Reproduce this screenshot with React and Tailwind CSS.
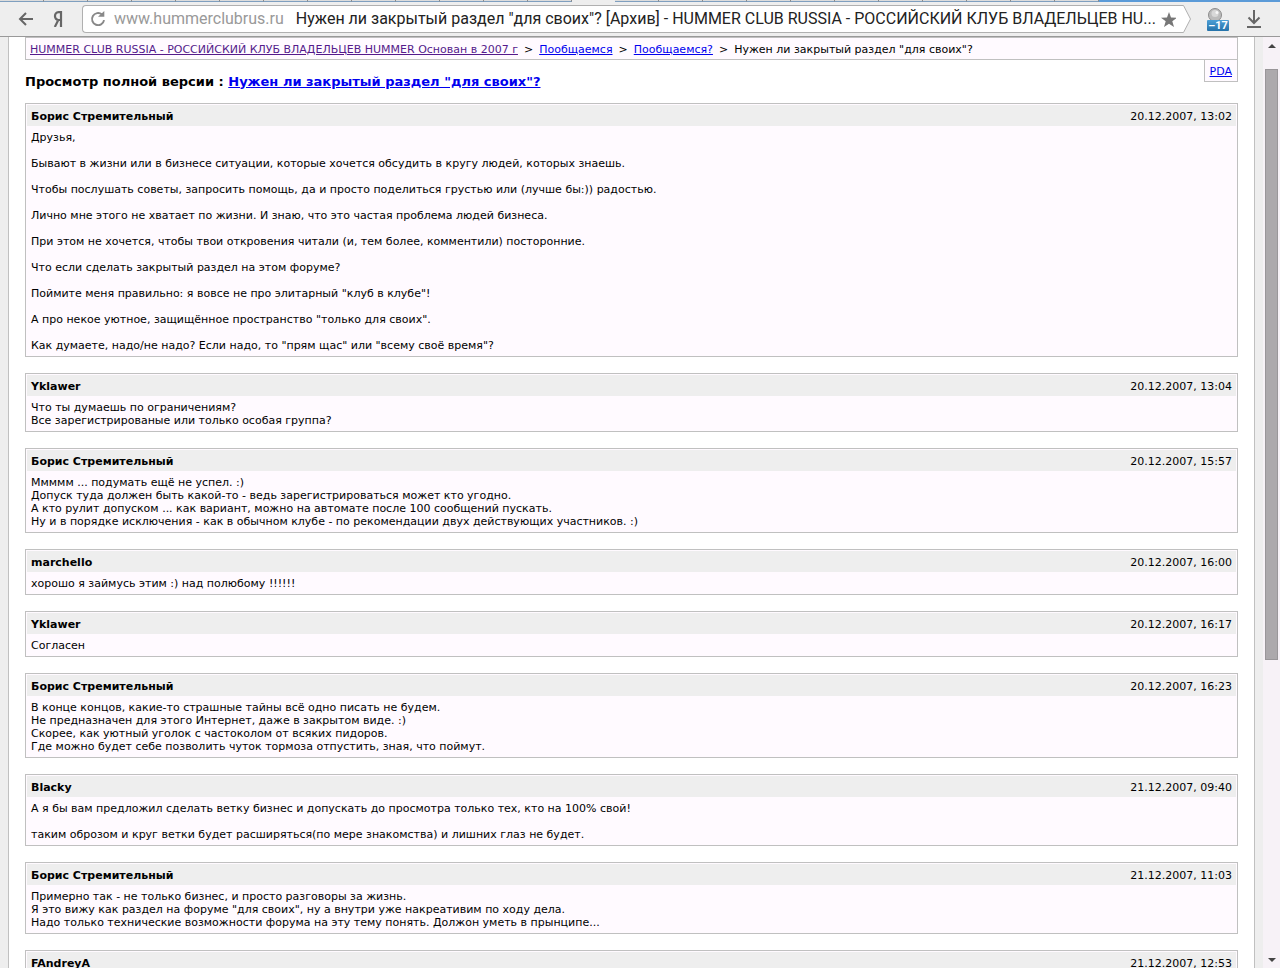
const posts = [
  {
    author: 'Борис Стремительный',
    date: '20.12.2007, 13:02',
    text: `Друзья,

Бывают в жизни или в бизнесе ситуации, которые хочется обсудить в кругу людей, которых знаешь.

Чтобы послушать советы, запросить помощь, да и просто поделиться грустью или (лучше бы:)) радостью.

Лично мне этого не хватает по жизни. И знаю, что это частая проблема людей бизнеса.

При этом не хочется, чтобы твои откровения читали (и, тем более, комментили) посторонние.

Что если сделать закрытый раздел на этом форуме?

Поймите меня правильно: я вовсе не про элитарный "клуб в клубе"!

А про некое уютное, защищённое пространство "только для своих".

Как думаете, надо/не надо? Если надо, то "прям щас" или "всему своё время"?`,
  },
  {
    author: 'Yklawer',
    date: '20.12.2007, 13:04',
    text: `Что ты думаешь по ограничениям?
Все зарегистрированые или только особая группа?`,
  },
  {
    author: 'Борис Стремительный',
    date: '20.12.2007, 15:57',
    text: `Ммммм ... подумать ещё не успел. :)
Допуск туда должен быть какой-то - ведь зарегистрироваться может кто угодно.
А кто рулит допуском ... как вариант, можно на автомате после 100 сообщений пускать.
Ну и в порядке исключения - как в обычном клубе - по рекомендации двух действующих участников. :)`,
  },
  {
    author: 'marchello',
    date: '20.12.2007, 16:00',
    text: 'хорошо я займусь этим :) над полюбому !!!!!!',
  },
  { author: 'Yklawer', date: '20.12.2007, 16:17', text: 'Согласен' },
  {
    author: 'Борис Стремительный',
    date: '20.12.2007, 16:23',
    text: `В конце концов, какие-то страшные тайны всё одно писать не будем.
Не предназначен для этого Интернет, даже в закрытом виде. :)
Скорее, как уютный уголок с частоколом от всяких пидоров.
Где можно будет себе позволить чуток тормоза отпустить, зная, что поймут.`,
  },
  {
    author: 'Blacky',
    date: '21.12.2007, 09:40',
    text: `А я бы вам предложил сделать ветку бизнес и допускать до просмотра только тех, кто на 100% свой!

таким оброзом и круг ветки будет расширяться(по мере знакомства) и лишних глаз не будет.`,
  },
  {
    author: 'Борис Стремительный',
    date: '21.12.2007, 11:03',
    text: `Примерно так - не только бизнес, и просто разговоры за жизнь.
Я это вижу как раздел на форуме "для своих", ну а внутри уже накреативим по ходу дела.
Надо только технические возможности форума на эту тему понять. Должон уметь в прынципе...`,
  },
  { author: 'FAndreyA', date: '21.12.2007, 12:53', text: '' },
];

function TabStrip() {
  return (
    <div className="flex h-[2px] shrink-0 bg-[#5b9bd8]" aria-hidden="true">
      <div className="flex w-[1099px]">
        {Array.from({ length: 25 }, (_, i) => (
          <div
            key={i}
            className={
              i === 13
                ? 'flex-1 bg-[#eeeeee]'
                : 'flex-1 border-r border-b border-r-[#8a8a8a] border-b-[#7f9fbf] bg-[#dcdcdc]'
            }
          />
        ))}
      </div>
    </div>
  );
}

function Toolbar() {
  return (
    <header className="flex h-[35px] shrink-0 items-center border-b border-[#999999] bg-[#eeeeee] pl-[18px] font-['Roboto','Noto_Sans',sans-serif]">
      <button type="button" aria-label="Назад" className="w-4 shrink-0">
        <svg viewBox="0 0 16 14" className="h-[14px] w-4" fill="none" stroke="#666" strokeWidth="2">
          <path d="M15 7H2M8 1L2 7l6 6" />
        </svg>
      </button>
      <button type="button" aria-label="Яндекс" className="ml-[19px] w-[10px] shrink-0">
        <svg viewBox="0 0 10 16" className="h-4 w-[10px]" fill="none" stroke="#666" strokeWidth="2.2">
          <path d="M8 16V1.100H5.500C0.800 1.100 0.800 9 5.500 9H8M5.300 9L1.800 16" />
        </svg>
      </button>
      <div className="relative ml-[19px] flex h-7 min-w-0 flex-1 items-center">
        <svg
          className="absolute inset-y-0 right-0 h-7 w-4"
          viewBox="0 0 16 28"
          fill="#fff"
          stroke="#b0b0b0"
        >
          <path d="M0 .5H7.500L14.500 14L7.500 27.500H0" />
        </svg>
        <div className="mr-[15px] flex h-7 min-w-0 flex-1 items-center rounded-l-sm border-y border-l border-[#b0b0b0] bg-white pl-[7px]">
          <button type="button" aria-label="Обновить" className="shrink-0">
            <svg viewBox="0 0 14 14" className="size-4" fill="none" stroke="#888" strokeWidth="1.700">
              <path d="M10.500 3A5.300 5.300 0 1 0 12.300 8" />
              <path d="M7 5H12.500V0z" fill="#888" stroke="none" />
            </svg>
          </button>
          <span className="ml-2 shrink-0 text-[16px] text-[#999999]">www.hummerclubrus.ru</span>
          <span className="ml-3 min-w-0 flex-1 text-[16px] whitespace-nowrap text-[#222222]">
            Нужен ли закрытый раздел "для своих"? [Архив] - HUMMER CLUB RUSSIA - РОССИЙСКИЙ КЛУБ ВЛАДЕЛЬЦЕВ HU...
          </span>
          <button type="button" aria-label="В закладки" className="ml-2 shrink-0">
            <svg viewBox="0 0 16 15" className="h-[15px] w-4" fill="#777">
              <path d="M8 0l2 5.500 6 .2-4.700 3.600L13 15l-5-3.300L3 15l1.700-5.700L0 5.700l6-.2z" />
            </svg>
          </button>
        </div>
      </div>
      <button type="button" className="ml-[14px] flex w-6 shrink-0 flex-col items-center">
        <svg viewBox="0 0 16 12" className="mr-[6px] h-3 w-4">
          <circle cx="8" cy="7" r="6.500" fill="#bcbcbc" stroke="#8c8c8c" />
          <circle cx="8" cy="5.500" r="3.500" fill="#d8d8d8" />
          <circle cx="10" cy="4.500" r="1.500" fill="#f8f8f8" />
        </svg>
        <span className="h-[11px] w-[22px] rounded-[1px] bg-linear-to-b from-[#4c9fd6] to-[#2572aa] text-center font-['Roboto',sans-serif] text-[11px] leading-[11px] font-bold text-white">
          –17
        </span>
      </button>
      <button type="button" aria-label="Загрузки" className="mr-[19px] ml-[17px] shrink-0">
        <svg viewBox="0 0 14 18" className="h-[18px] w-[14px]" fill="none" stroke="#666" strokeWidth="2">
          <path d="M7 0V13M1.500 7.500L7 13l5.500-5.500M0 17H14" />
        </svg>
      </button>
    </header>
  );
}

function Post({ author, date, text }) {
  return (
    <article className="mb-4 border border-[#c0c0c0] bg-[#fffaff] p-px pb-0">
      <header className="flex h-[21px] items-center justify-between bg-[#eeeeee] px-1 pt-px">
        <h2 className="font-bold">{author}</h2>
        <time>{date}</time>
      </header>
      <p className="px-1 pt-[5px] pb-1 whitespace-pre-line">{text}</p>
    </article>
  );
}

function ScrollBar() {
  return (
    <div className="flex w-[17px] shrink-0 flex-col items-center bg-[#f7f2f7]" aria-hidden="true">
      <svg viewBox="0 0 8 4" className="mt-[7px] h-1 w-2 shrink-0" fill="#444">
        <path d="M0 4L4 0l4 4z" />
      </svg>
      <div className="mt-[21px] h-[591px] w-[13px] shrink-0 border border-[#999699] bg-[#aca9ac]" />
      <svg viewBox="0 0 8 4" className="mt-auto mb-[6px] h-1 w-2 shrink-0" fill="#444">
        <path d="M0 0L4 4l4-4z" />
      </svg>
    </div>
  );
}

export default function App() {
  return (
    <div className="flex h-screen flex-col overflow-hidden bg-[#eeeeee]">
      <TabStrip />
      <Toolbar />
      <div className="flex min-h-0 flex-1">
        <main className="mr-2 ml-2 min-w-0 flex-1 overflow-hidden border-x border-[#c0c0c0] bg-white px-4 font-['Verdana','DejaVu_Sans',sans-serif] text-[11px] leading-[13px] text-black">
          <nav className="flex h-[23px] items-center gap-[6px] border border-[#c0c0c0] bg-[#fffaff] px-1 pt-px whitespace-nowrap">
            <a href="#home" className="text-[#551a8b] underline">
              HUMMER CLUB RUSSIA - РОССИЙСКИЙ КЛУБ ВЛАДЕЛЬЦЕВ HUMMER Основан в 2007 г
            </a>
            <span>&gt;</span>
            <a href="#forum" className="text-[#0000ee] underline">Пообщаемся</a>
            <span>&gt;</span>
            <a href="#subforum" className="text-[#0000ee] underline">Пообщаемся?</a>
            <span>&gt;</span>
            <span>Нужен ли закрытый раздел "для своих"?</span>
          </nav>
          <div className="flex h-[43px] items-start justify-between">
            <h1 className="self-center text-[13px] leading-4 font-bold">
              Просмотр полной версии :{' '}
              <a href="#topic" className="text-[#0000ee] underline">
                Нужен ли закрытый раздел "для своих"?
              </a>
            </h1>
            <a
              href="#pda"
              className="flex h-[22px] items-center border-x border-b border-[#c0c0c0] bg-[#fffaff] px-[5px] pt-px text-[#0000ee] underline"
            >
              PDA
            </a>
          </div>
          {posts.map((post) => (
            <Post key={post.date} {...post} />
          ))}
        </main>
        <ScrollBar />
      </div>
    </div>
  );
}
